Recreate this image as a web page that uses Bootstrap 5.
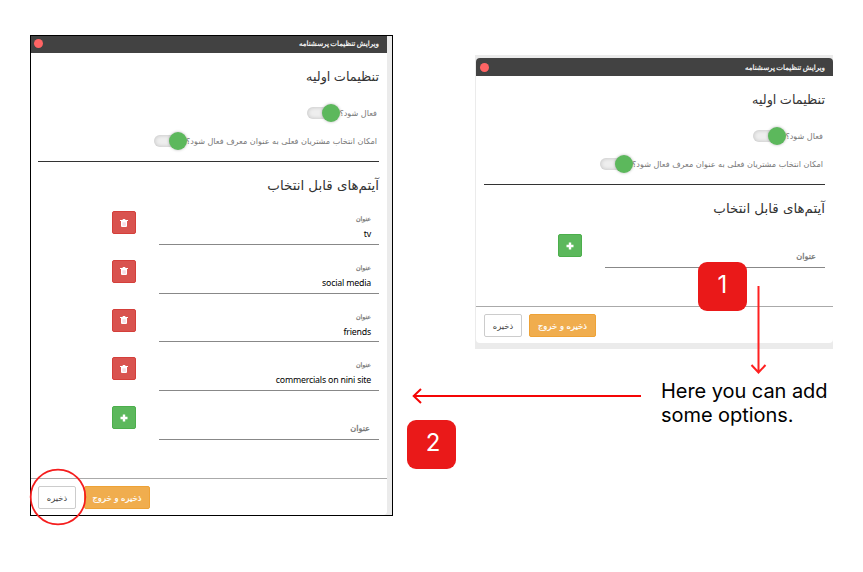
<!DOCTYPE html>
<html lang="fa">
<head>
<meta charset="utf-8">
<meta name="viewport" content="width=device-width, initial-scale=1">
<title>ویرایش تنظیمات پرسشنامه</title>
<link rel="stylesheet" href="https://cdn.jsdelivr.net/npm/bootstrap@5.3.0/dist/css/bootstrap.min.css">
<style>
body{width:863px;height:572px;overflow:hidden;background:#fff;font-family:"DejaVu Sans",sans-serif;color:#333}
.stage{padding:35px 30px 0;width:863px;height:572px}
.pane{background:#ebebeb}
.pane-a{width:363px;height:481px;border:1px solid #000;padding-right:5px}
.pane-b{width:358px;height:294px;margin-top:20px;padding:3px 0 6px 1px}
.dlg{background:#fff;height:100%;overflow:hidden}
.pane-a .dlg{border-bottom-right-radius:4px}
.pane-b .dlg{border-radius:4px}
.bar{background:#424242;height:18px;padding:0 8px 0 4px;color:#fff}
.pane-a .bar{height:17px;padding:0 8px 2px 3px}
.dot{width:9px;height:9px;border-radius:50%;background:#ff6464}
.ttl{font-size:7.1px;line-height:15px;word-spacing:-.9px;white-space:nowrap;-webkit-text-stroke:.2px #fff}
.inner{padding:0 8px 0 7px}
.pane-b .inner,.pane-b .foot{padding-left:8px}
.hd{font-size:13.4px;line-height:20px;height:20px;margin:0;font-weight:400;color:#333;white-space:nowrap}
.hd-1{margin-top:14px;margin-bottom:12px;font-size:12.8px;word-spacing:-.6px}
.hd-2{margin-top:14px}
.opt{height:28px;padding-right:2px;font-size:8.1px;color:#777;white-space:nowrap}
.switch{width:33px;height:18px;margin-right:-1px}
.track{width:24px;height:12px;border-radius:6px 0 0 6px;background:#eee;box-shadow:inset 0 0 4px rgba(0,0,0,.2);margin-right:-9px}
.knob{width:18px;height:18px;border-radius:50%;background:#5cb85c;box-shadow:0 0 3px rgba(0,0,0,.3);z-index:1}
.rule{height:1px;background:#333;margin-top:6px}
.item{height:48.75px}
.sq{width:24px;height:23px;margin:15px 23px 0 0;border-radius:2px;padding:0;border:1px solid}
.sq-r{background:#d9534f;border-color:#d43f3a}
.sq-g{background:#5cb85c;border-color:#4cae4c}
.fld{width:220px;border-bottom:1px solid #888;padding-right:8px;white-space:nowrap}
.cap{font-size:6.2px;line-height:12px;margin-top:17px;color:#777;-webkit-text-stroke:.25px #777}
.val{font-family:"Noto Sans",sans-serif;font-size:8.8px;letter-spacing:-.2px;line-height:14px;margin-top:2px;color:#000}
.cap-lg{font-size:8.2px;line-height:14px;margin-top:30px;padding-right:1px;color:#777;-webkit-text-stroke:.3px #777}
.foot{border-top:1px solid #aaa;margin-top:38px;padding:7px 7px 0;gap:8px}
.pane-b .foot{gap:7px}
.bt{height:23px;border-radius:2px;border:1px solid #ccc;font-size:8.4px;line-height:20px;padding:1px 0 0;text-align:center;white-space:nowrap;background:#fff;color:#444}
.bt-s{width:38px}
.bt-w{width:67px;background:#f0ad4e;border-color:#eea236;color:#fff;-webkit-text-stroke:.2px #fff}
.pane-a .bt-w{width:66px}
.over{left:0;top:0;pointer-events:none}
.num{width:49px;height:49px;border-radius:9px;background:#ea1919;color:#fff;font:400 24px/46px Inter,sans-serif;text-align:center}
.n1{left:698px;top:262px}
.n2{left:407px;top:420px;padding-left:3px}
.tip{left:661px;top:379px;font:400 20px/24px Inter,sans-serif;letter-spacing:-.05px;color:#000;white-space:nowrap}
</style>
<script src="https://cdn.jsdelivr.net/npm/bootstrap@5.3.0/dist/js/bootstrap.bundle.min.js"></script>
</head>
<body class="position-relative">
<svg width="0" height="0" class="position-absolute">
<symbol id="bin" viewBox="0 0 8 8"><path d="M2.7 0h2.6v1H8v1H0V1h2.7zM1 1.9h6V7q0 1-1 1H2Q1 8 1 7z" fill="#fff"/><path d="M3 3.3v3.5M4.1 3.3v3.5M5.2 3.3v3.5" stroke="#edb6c6" stroke-width=".6"/></symbol>
<symbol id="plus" viewBox="0 0 8 8"><path d="M2.8 .5h2.4v2.3h2.3v2.4H5.2v2.3H2.8V5.2H.5V2.8h2.3z" fill="#fff"/></symbol>
</svg>
<main class="stage d-flex align-items-start justify-content-between">
<section class="pane pane-a"><div class="dlg">
<header class="bar d-flex justify-content-between align-items-center"><span class="dot"></span><span class="ttl" dir="rtl">ویرایش تنظیمات پرسشنامه</span></header>
<div class="inner" dir="rtl">
<h2 class="hd hd-1">تنظیمات اولیه</h2>
<div class="opt d-flex align-items-center"><span>فعال شود؟</span><span class="switch d-flex align-items-center" dir="ltr"><span class="track"></span><span class="knob"></span></span></div>
<div class="opt d-flex align-items-center"><span>امکان انتخاب مشتریان فعلی به عنوان معرف فعال شود؟</span><span class="switch d-flex align-items-center" dir="ltr"><span class="track"></span><span class="knob"></span></span></div>
<div class="rule"></div>
<h2 class="hd hd-2">آیتم‌های قابل انتخاب</h2>
<div class="item d-flex"><div class="fld"><div class="cap">عنوان</div><div class="val">tv</div></div><div><button class="sq sq-r d-flex align-items-center justify-content-center"><svg width="8" height="8"><use href="#bin"/></svg></button></div></div>
<div class="item d-flex"><div class="fld"><div class="cap">عنوان</div><div class="val">social media</div></div><div><button class="sq sq-r d-flex align-items-center justify-content-center"><svg width="8" height="8"><use href="#bin"/></svg></button></div></div>
<div class="item d-flex"><div class="fld"><div class="cap">عنوان</div><div class="val">friends</div></div><div><button class="sq sq-r d-flex align-items-center justify-content-center"><svg width="8" height="8"><use href="#bin"/></svg></button></div></div>
<div class="item d-flex"><div class="fld"><div class="cap">عنوان</div><div class="val">commercials on nini site</div></div><div><button class="sq sq-r d-flex align-items-center justify-content-center"><svg width="8" height="8"><use href="#bin"/></svg></button></div></div>
<div class="item d-flex"><div class="fld"><div class="cap-lg">عنوان</div></div><div><button class="sq sq-g d-flex align-items-center justify-content-center"><svg width="8" height="8"><use href="#plus"/></svg></button></div></div>
</div>
<footer class="foot d-flex"><button class="bt bt-s">ذخیره</button><button class="bt bt-w">ذخیره و خروج</button></footer>
</div></section>
<section class="pane pane-b"><div class="dlg">
<header class="bar d-flex justify-content-between align-items-center"><span class="dot"></span><span class="ttl" dir="rtl">ویرایش تنظیمات پرسشنامه</span></header>
<div class="inner" dir="rtl">
<h2 class="hd hd-1">تنظیمات اولیه</h2>
<div class="opt d-flex align-items-center"><span>فعال شود؟</span><span class="switch d-flex align-items-center" dir="ltr"><span class="track"></span><span class="knob"></span></span></div>
<div class="opt d-flex align-items-center"><span>امکان انتخاب مشتریان فعلی به عنوان معرف فعال شود؟</span><span class="switch d-flex align-items-center" dir="ltr"><span class="track"></span><span class="knob"></span></span></div>
<div class="rule"></div>
<h2 class="hd hd-2">آیتم‌های قابل انتخاب</h2>
<div class="item d-flex"><div class="fld"><div class="cap-lg">عنوان</div></div><div><button class="sq sq-g d-flex align-items-center justify-content-center"><svg width="8" height="8"><use href="#plus"/></svg></button></div></div>
</div>
<footer class="foot d-flex"><button class="bt bt-s">ذخیره</button><button class="bt bt-w">ذخیره و خروج</button></footer>
</div></section>
</main>
<div class="num n1 position-absolute">1</div>
<div class="num n2 position-absolute">2</div>
<p class="tip position-absolute m-0">Here you can add<br>some options.</p>
<svg class="over position-absolute" width="863" height="572" fill="none">
<circle cx="58" cy="497" r="27.3" stroke="#f51d1d" stroke-width="1.8"/>
<path d="M758.5 286V372M751.5 365l7 7.5 7-7.5" stroke="#ff2020" stroke-width="2"/>
<path d="M641 396H414M421 389l-7.3 7 7.3 7" stroke="#f50505" stroke-width="2"/>
</svg>
</body>
</html>
